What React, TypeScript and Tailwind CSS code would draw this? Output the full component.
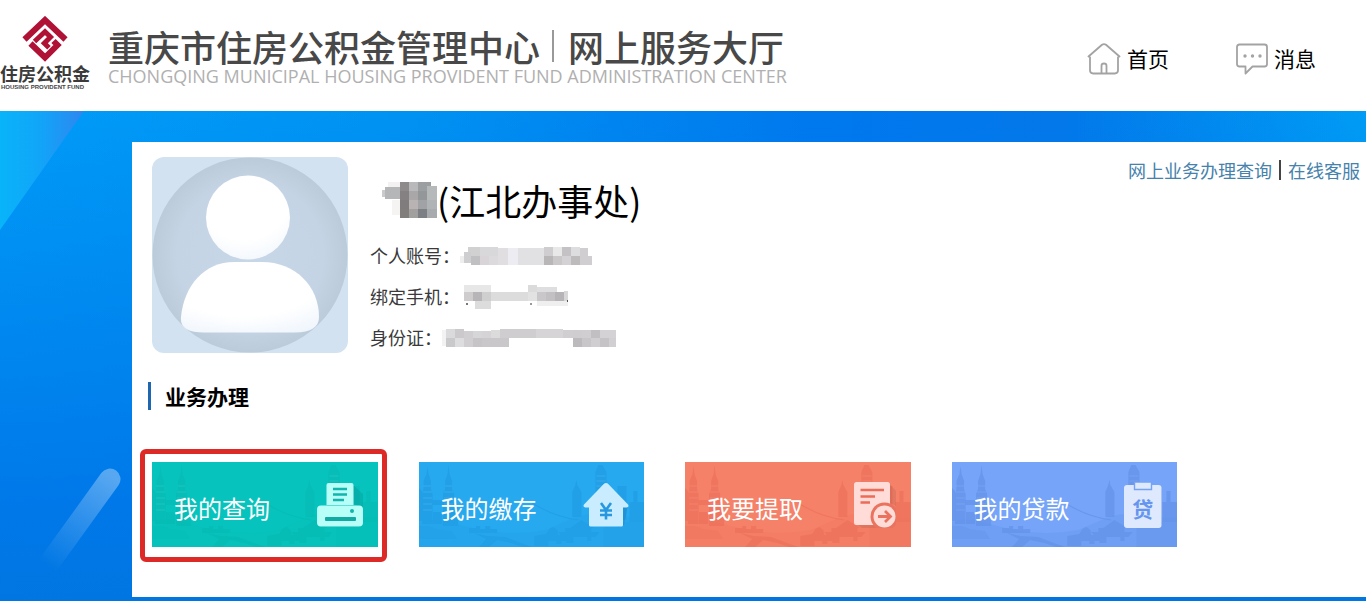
import type { ReactNode } from "react";

function EmblemIcon() {
  return (
    <svg viewBox="0 0 46 46" className="h-[46px] w-[46px]" fill="none" stroke="#b01236" aria-hidden="true">
      <path d="M2.500 23.500 23 4l20.500 19.500" strokeWidth="6" />
      <path d="M12.500 25.500 23 15.700l5.500 5.300-6.200 6.200 4.700 4.600" strokeWidth="5" />
      <path d="M8.500 27.500 23 41.500 35.500 29l-4-4" strokeWidth="6" />
    </svg>
  );
}

function HomeIcon() {
  return (
    <svg viewBox="0 0 34 32" className="h-8 w-[34px]" fill="none" stroke="#a3a3a3" strokeWidth="1.8" strokeLinejoin="round" strokeLinecap="round" aria-hidden="true">
      <path d="M1.500 13.500 15 1.800q2-1.500 4 0L32.500 13.500l-1.500.8v13q0 3.200-3.200 3.200H6.200Q3 30.500 3 27.300v-13z" />
      <path d="M14.500 30v-7.200q0-2.300 2.500-2.300t2.500 2.300V30" />
    </svg>
  );
}

function MessageIcon() {
  return (
    <svg viewBox="0 0 32 32" className="h-8 w-8" fill="none" stroke="#a3a3a3" strokeWidth="1.800" strokeLinejoin="round" aria-hidden="true">
      <path d="M3.500 1.500h25q2.500 0 2.500 2.500v17q0 2.500-2.500 2.500H16.500L9.500 30.500v-7h-6Q1 23.500 1 21V4q0-2.500 2.500-2.500z" />
      <g fill="#a3a3a3" stroke="none">
        <circle cx="9" cy="13" r="1.700" />
        <circle cx="16.500" cy="13" r="1.700" />
        <circle cx="24" cy="13" r="1.700" />
      </g>
    </svg>
  );
}

function Avatar() {
  return (
    <svg viewBox="0 0 196 196" className="h-[196px] w-[196px] shrink-0 rounded-xl" role="img" aria-label="头像">
      <defs>
        <radialGradient id="disc">
          <stop offset="0" stopColor="#c8d7e8" />
          <stop offset="0.75" stopColor="#c5d4e4" />
          <stop offset="1" stopColor="#bccbd9" />
        </radialGradient>
        <radialGradient id="bust" cx="0.45" cy="0.2" r="0.95">
          <stop offset="0.6" stopColor="#ffffff" />
          <stop offset="1" stopColor="#edf4fc" />
        </radialGradient>
      </defs>
      <rect width="196" height="196" fill="#d3e2f1" />
      <circle cx="98" cy="98" r="97.500" fill="url(#disc)" />
      <circle cx="96" cy="60.500" r="42" fill="url(#bust)" />
      <path d="M82 105h28c33 0 57 24 57 55 0 10-8 15.500-24 15.500H52c-16 0-24-4.500-23-15.500 3-32 24-55 53-55z" fill="url(#bust)" />
    </svg>
  );
}

type Block = [number, number, number, number, string];

function Mosaic({ width, height, blocks }: { width: number; height: number; blocks: Block[] }) {
  return (
    <svg width={width} height={height} viewBox={`0 0 ${width} ${height}`} className="shrink-0" aria-hidden="true">
      {blocks.map(([x, y, w, h, fill], i) => (
        <rect key={i} x={x} y={y} width={w} height={h} fill={fill} />
      ))}
    </svg>
  );
}

const nameBlocks: Block[] = [
  [6, 0, 13, 9, "#f3f1f1"], [3, 5, 16, 12, "#b5b6b7"], [0, 8, 3, 7, "#c9cacb"], [10, 18, 9, 15, "#f6f4f3"],
  [18, 0, 9, 9, "#8e8a8b"], [27, 0, 9, 9, "#b9b9bb"], [36, 0, 13, 9, "#9b9fa1"],
  [18, 9, 9, 9, "#858183"], [27, 9, 9, 9, "#aaa7a9"], [36, 9, 9, 9, "#939799"], [45, 4, 10, 14, "#b5b9ba"],
  [18, 18, 9, 9, "#807c7e"], [27, 18, 9, 9, "#b9b4b3"], [36, 18, 9, 9, "#a1a2a6"], [45, 18, 10, 10, "#b0b3b5"],
  [18, 27, 9, 9, "#827d7d"], [27, 27, 9, 9, "#a29f9f"], [36, 27, 9, 9, "#7c8085"], [45, 27, 10, 9, "#a8abad"],
];

const accountBlocks: Block[] = [
  [0, 9, 6, 7, "#efeeee"], [8, 0, 12, 9, "#d2d1d2"], [4, 5, 7, 11, "#cecdcf"], [11, 9, 10, 9, "#c0bfc2"],
  [20, 0, 18, 9, "#d8d7d9"], [20, 9, 9, 9, "#d9d4d7"], [29, 9, 9, 9, "#dcdadd"],
  [38, 1, 10, 17, "#e0dee1"], [48, 1, 10, 17, "#ececf2"], [58, 1, 26, 17, "#e1e0e2"],
  [84, 0, 9, 9, "#cfcdcf"], [84, 9, 9, 9, "#b9b6b8"], [93, 0, 9, 9, "#e8e8e9"], [93, 9, 9, 9, "#cbc8ca"],
  [102, 0, 9, 9, "#c4c2c4"], [102, 9, 9, 9, "#d4d2d4"], [111, 0, 9, 9, "#dddcde"], [111, 9, 9, 9, "#bebbbd"],
  [120, 1, 8, 8, "#d0ced0"], [120, 9, 12, 9, "#d0ced0"],
];

const phoneBlocks: Block[] = [
  [0, 0, 27, 7, "#e8e7e8"], [0, 7, 9, 9, "#cfcccd"], [9, 7, 9, 9, "#b8b5b8"], [18, 7, 9, 9, "#d0cfd0"],
  [11, 16, 16, 9, "#dddcdd"], [27, 7, 37, 9, "#dddcdd"], [64, 0, 9, 7, "#dcdbdc"], [73, 2, 20, 5, "#dedddf"],
  [64, 7, 9, 9, "#e3e2e3"], [73, 7, 9, 9, "#c9c7c9"], [82, 7, 9, 9, "#c2c0c2"], [91, 7, 9, 9, "#b6b4b7"], [100, 6, 4, 10, "#d8d7d8"],
  [73, 16, 31, 5, "#f0eff0"], [2, 18, 2, 2, "#777777"], [66, 18, 2, 2, "#999999"], [103, 15, 1, 2, "#555555"],
];

const idBlocks: Block[] = [
  [0, 1, 4, 16, "#f2f2f2"], [4, 0, 9, 9, "#dad9db"], [4, 9, 9, 9, "#c9c8ca"], [13, 0, 9, 9, "#cbc9cc"], [13, 9, 9, 9, "#dddcde"],
  [22, 2, 9, 16, "#d0ced0"], [31, 2, 9, 7, "#d6d5d7"], [31, 9, 9, 9, "#c6c4c7"], [40, 2, 9, 7, "#d5d3d5"], [40, 9, 27, 9, "#c9c7ca"],
  [49, 1, 9, 8, "#dcdbdc"], [58, 0, 63, 9, "#d6d4d7"], [58, 0, 36, 9, "#cfcdcf"], [121, 1, 10, 8, "#d0ced1"],
  [131, 1, 9, 8, "#cfcdcf"], [131, 9, 9, 9, "#bcbabd"], [140, 1, 9, 8, "#d0ced1"], [140, 9, 9, 9, "#c8c6c9"],
  [149, 1, 9, 8, "#c1bfc2"], [149, 9, 9, 9, "#d0ced1"], [158, 1, 16, 8, "#d4d2d5"], [158, 9, 9, 9, "#c5c3c6"], [167, 9, 7, 9, "#d1cfd2"],
];

function Skyline() {
  return (
    <svg viewBox="0 0 225 85" preserveAspectRatio="none" className="absolute inset-0 h-full w-full" fill="currentColor" aria-hidden="true">
      <path opacity="0.3" d="M0 60q12-5 28-1 14 5 36 9 30 6 62 0l30-13q20-6 38-1l31 2v29H0z" />
      <g opacity="0.8">
        <path d="M8.500 4l1 8 2.500 7v8l1.500 5v30H3V32l1.500-5v-8L7.500 12zM29.500 3l1 9 2.500 7v8l2 5v12h4v20H24V32l2-5v-8l2.500-7z" />
        <path d="M0 26l3 3v30H0zM13 38h11v5H13zM14 50h9v12h-9z" />
        <path d="M157 18l1 5 4 7v25h-9V30l3-7zM176 10l3-7h4l4 7v50h-11zM198 24h9v34h-9zM210 40h4V29h4v11h7v20h-15z" />
        <path fill="none" stroke="currentColor" strokeWidth="1" d="M113 41q22 14 46 17" />
        <path d="M50 66h7v-2h4v3h5v-3h5v3h7v4H50zM55 71l13 3 18 1 13 5 14 5h-9l-12-4-14-3-8 7H60l7-8zM115 74l12-2 3-5 4-2 4 3 1 5 8-1 5 4v3h-10v3h-5v-3h-8v5h-14zM151 66l11-8 13 8h-3v4h8l-4 5h-4v4h-4v-4h-14v6h-7v-6h-4l-4-5h7v-4z" />
        <path d="M0 64h10l8 3 15 2 5 8H0zM184 65l12-5h29v25h-41z" opacity="0.4" />
      </g>
      <path opacity="0.1" stroke="#fff" strokeWidth="1" d="M4 24h8M4 30h9M4 36h9M4 42h9M4 48h9M26 24h7M25 30h9M25 36h9M25 42h9M177 14h9M177 19h9M177 24h9" />
    </svg>
  );
}

function PrinterIcon() {
  return (
    <svg viewBox="0 0 46 44" className="h-11 w-[46px]" aria-hidden="true">
      <path d="M36 2l10 9v15l-9-5zM4 43l10 7h24l8-10z" fill="#000" opacity="0.08" />
      <path d="M11.500 0h23q2 0 2 2v20h-27V2q0-2 2-2z" fill="#b8fff8" />
      <path d="M16 6h14M16 11.500h14M16 17h11" stroke="#12b5ad" strokeWidth="2.600" />
      <rect y="22.500" width="46" height="21" rx="4" fill="#b8fff8" />
      <circle cx="35" cy="28" r="2" fill="#12b5ad" />
      <rect x="8" y="34" width="31" height="4" rx="1" fill="#12aaa3" />
    </svg>
  );
}

function DepositIcon() {
  return (
    <svg viewBox="0 0 46 44" className="h-11 w-[46px]" aria-hidden="true">
      <path d="M26 2l19 20-4 20-6 2z" fill="#000" opacity="0.08" />
      <path d="M20.500 1.200q2.500-2.400 5 0L45 21.500q1.500 2.500-1.500 3H40V42q0 1.500-1.500 1.500h-31Q6 43.500 6 42V24.500H2.500q-3-.5-1.500-3z" fill="#c9ecff" />
      <path d="M18 20l5 7 5-7M23 27v9.500M17 27.500h12M17 32h12" fill="none" stroke="#2798df" strokeWidth="2.600" />
    </svg>
  );
}

function WithdrawIcon() {
  return (
    <svg viewBox="0 0 42 46" className="h-[46px] w-[42px]" aria-hidden="true">
      <path d="M36 2l6 7v15l-8-4zM4 43l8 6h14l3-6z" fill="#000" opacity="0.07" />
      <rect width="36" height="43" rx="2.500" fill="#ffdcd8" />
      <path d="M6.500 8H30M6.500 14.500H21M6.500 20.500H16" stroke="#ec6c57" strokeWidth="2.600" />
      <circle cx="30.500" cy="34.500" r="14" fill="#e9735f" />
      <circle cx="30.500" cy="34.500" r="11" fill="#ffdcd8" />
      <path d="M24 34.500h12M31 29l5.500 5.500L31 40" fill="none" stroke="#e9735f" strokeWidth="2.800" />
    </svg>
  );
}

function LoanIcon() {
  return (
    <svg viewBox="0 0 38 46" className="h-[46px] w-[38px]" aria-hidden="true">
      <path d="M34 4l12 10v28H34z" fill="#000" opacity="0.06" />
      <rect y="3" width="37.500" height="43" rx="3" fill="#dfe9fe" />
      <path d="M10.500 0h17v7.500h-17z" fill="#dfe9fe" stroke="#75a2f2" strokeWidth="1.400" />
      <text x="18.800" y="35" textAnchor="middle" fontSize="21" fontWeight="700" fill="#6595ee">贷</text>
    </svg>
  );
}

interface TileProps {
  label: string;
  tone: string;
  icon: ReactNode;
  marked?: boolean;
}

function Tile({ label, tone, icon, marked }: TileProps) {
  return (
    <div className="relative">
      <button type="button" className={`relative flex h-[85px] w-full cursor-pointer items-center justify-between overflow-hidden pl-[22px] pr-[15px] ${tone}`}>
        <Skyline />
        <span className="relative pt-1.5 text-2xl text-white">{label}</span>
        <span className="relative">{icon}</span>
      </button>
      {marked && <div className="pointer-events-none absolute -bottom-[15px] -left-3 -right-[9px] -top-[13px] rounded-md border-[5px] border-[#dd2a26]" />}
    </div>
  );
}

const tiles: TileProps[] = [
  { label: "我的查询", tone: "bg-[#06c4bd] text-[#06bcb6]", icon: <PrinterIcon />, marked: true },
  { label: "我的缴存", tone: "bg-[#27a9f0] text-[#219ee6]", icon: <DepositIcon /> },
  { label: "我要提取", tone: "bg-[#f58169] text-[#ef735d]", icon: <WithdrawIcon /> },
  { label: "我的贷款", tone: "bg-[#75a4f8] text-[#6594eb]", icon: <LoanIcon /> },
];

const details = [
  { label: "个人账号：", gap: "ml-0", width: 132, height: 18, blocks: accountBlocks },
  { label: "绑定手机：", gap: "ml-1", width: 104, height: 24, blocks: phoneBlocks },
  { label: "身份证：", gap: "ml-0", width: 174, height: 18, blocks: idBlocks },
];

export default function App() {
  return (
    <div className="flex min-h-screen flex-col overflow-x-hidden bg-white font-['Noto_Sans_CJK_SC',sans-serif] text-black">
      <header className="flex h-[111px] items-center justify-between pr-[50px]">
        <div className="flex items-center">
          <div className="flex w-[108px] flex-col items-start pb-1">
            <div className="ml-[22px]">
              <EmblemIcon />
            </div>
            <span className="mt-px whitespace-nowrap text-lg/5 font-bold text-[#3b3b3b]">住房公积金</span>
            <span className="whitespace-nowrap pl-px font-['Liberation_Sans',sans-serif] text-[6px]/[9px] font-bold text-[#444444]">HOUSING PROVIDENT FUND</span>
          </div>
          <div>
            <h1 className="flex items-center whitespace-nowrap text-4xl/10 font-medium text-[#484848]">
              重庆市住房公积金管理中心
              <span className="ml-3 mr-3.5 h-8 w-0.5 bg-[#999999]" />
              网上服务大厅
            </h1>
            <p className="whitespace-nowrap font-['Open_Sans',sans-serif] text-lg/5 text-[#b0b0b0]">CHONGQING MUNICIPAL HOUSING PROVIDENT FUND ADMINISTRATION CENTER</p>
          </div>
        </div>
        <nav className="flex items-center gap-[67px] pt-1.5 text-[21px]">
          <a href="#home" className="flex items-center gap-1.5">
            <HomeIcon />
            首页
          </a>
          <a href="#messages" className="flex items-center gap-1.5">
            <MessageIcon />
            消息
          </a>
        </nav>
      </header>

      <main className="relative flex-1 bg-[linear-gradient(to_bottom,#0074e000,#0076e8f0_80%,#0074e0f0),linear-gradient(to_right,#009cf8,#0092f2_30%,#0078ee_60%,#0278ea_78%,#009cf5)] pb-1 pl-[132px] pt-[31px]">
        <svg viewBox="0 0 132 490" className="absolute left-0 top-0 h-[490px] w-[132px]" aria-hidden="true">
          <defs>
            <linearGradient id="corner">
              <stop offset="0" stopColor="#08b4fa" />
              <stop offset="0.5" stopColor="#12a4f8" />
              <stop offset="1" stopColor="#2f86f0" />
            </linearGradient>
            <linearGradient id="streak" x1="112" y1="366" x2="48" y2="456" gradientUnits="userSpaceOnUse">
              <stop offset="0" stopColor="#ffffff" stopOpacity="0.34" />
              <stop offset="1" stopColor="#ffffff" stopOpacity="0" />
            </linearGradient>
          </defs>
          <path d="M0 0h84L0 119z" fill="url(#corner)" />
          <path d="M110 368 48 454" stroke="url(#streak)" strokeWidth="21" strokeLinecap="round" />
        </svg>

        <section className="relative bg-white pb-[50px] pl-5 pt-[15px]">
          <div className="flex items-start">
            <Avatar />
            <div className="ml-[22px] flex-1">
              <h2 className="ml-3 mt-[18px] flex items-center whitespace-nowrap text-4xl/[50px]">
                <Mosaic width={55} height={36} blocks={nameBlocks} />
                (江北办事处)
              </h2>
              <dl className="mt-2.5 text-lg/[41px] text-[#3a3a3a]">
                {details.map((d) => (
                  <div key={d.label} className="flex items-center">
                    <dt>{d.label}</dt>
                    <dd className={d.gap}>
                      <Mosaic width={d.width} height={d.height} blocks={d.blocks} />
                    </dd>
                  </div>
                ))}
              </dl>
            </div>
            <div className="flex items-center gap-[7px] whitespace-nowrap pr-1.5 text-lg/[26px] text-[#4682ab]">
              <a href="#business">网上业务办理查询</a>
              <span className="h-5 w-0.5 bg-[#444444]" />
              <a href="#service">在线客服</a>
            </div>
          </div>

          <h3 className="-ml-1 mt-[22px] flex items-center text-[21px]/8 font-bold">
            <span className="mr-3.5 h-7 w-[3px] bg-[#1f66b0]" />
            业务办理
          </h3>

          <div className="mt-[50px] grid w-[85%] max-w-[1025px] grid-cols-4 gap-[41px]">
            {tiles.map((t) => (
              <Tile key={t.label} {...t} />
            ))}
          </div>
        </section>
      </main>
    </div>
  );
}
